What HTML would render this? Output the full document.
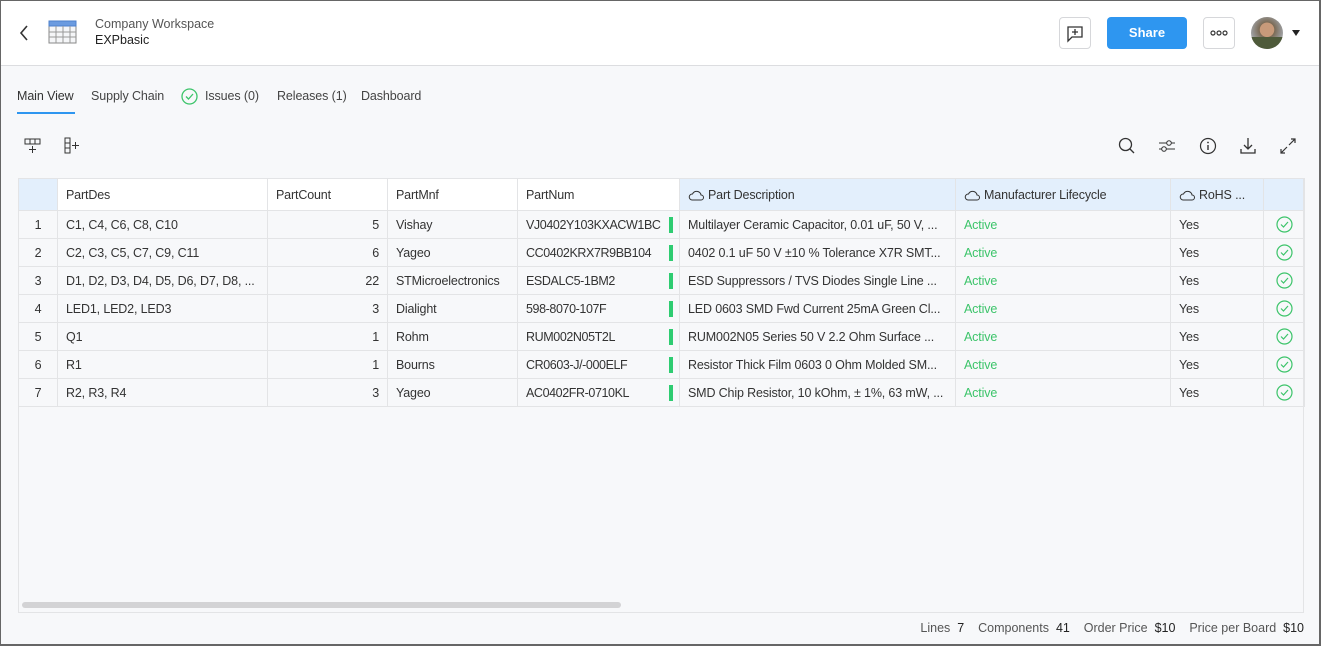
<!DOCTYPE html>
<html><head><meta charset="utf-8"><style>
*{box-sizing:border-box;margin:0;padding:0}
body{width:1321px;height:646px;overflow:hidden;background:#f7f8fa;font-family:"Liberation Sans",sans-serif;font-size:13px;color:#333;position:relative}
.frame{position:absolute;inset:0;border:1px solid #666;border-right:2px solid #666;border-bottom:2px solid #666;pointer-events:none;z-index:10}
.hdr{position:absolute;left:0;top:0;width:1321px;height:66px;background:#fff;border-bottom:1px solid #dcdde0}
.a{position:absolute}
.tab{position:absolute;top:89px;font-size:12.5px;color:#444;letter-spacing:-0.1px}
.btn{position:absolute;border:1px solid #d6d7da;border-radius:4px;background:#fff}
table{position:absolute;left:18px;top:178px;border-collapse:collapse;table-layout:fixed;width:1286px;font-size:12.5px;letter-spacing:-0.15px}
td,th{height:28px;border:1px solid #e3e4e6;padding:0 8px;white-space:nowrap;overflow:hidden;text-overflow:clip;font-weight:normal;text-align:left;background:#f7f8fa;position:relative}
th{height:32px;background:#fff;color:#333}
th.b{background:#e3effc}
td.n{text-align:center;padding:0}
td.r{text-align:right}
.g{color:#3cc46a}
.bar{position:absolute;right:6px;top:6px;width:4px;height:16px;background:#2ecc71}
.cl{display:inline-block;vertical-align:-2px;margin-right:4px}
</style></head><body>
<div class="frame"></div>
<div class="hdr">
<svg class="a" style="left:19px;top:25px" width="10" height="16"><path d="M8 1 L2 8 L8 15" fill="none" stroke="#333" stroke-width="1.6"/></svg>
<svg class="a" style="left:48px;top:20px" width="30" height="25"><rect x="1" y="1" width="27" height="22" fill="#f5f6f8" stroke="#888"/><rect x="1" y="1" width="27" height="5" fill="#6b9be0" stroke="#4e80cc"/><path d="M1 12H28M1 17H28M8 6V23M15 6V23M22 6V23" stroke="#999" fill="none"/></svg>
<div class="a" style="left:95px;top:17px;color:#555;font-size:12.5px">Company Workspace</div>
<div class="a" style="left:95px;top:33px;color:#222;font-size:12.5px">EXPbasic</div>
<div class="btn" style="left:1059px;top:17px;width:32px;height:32px"><svg width="30" height="30"><path d="M8 9H22V19H12L8 23Z" fill="none" stroke="#333" stroke-width="1.3"/><path d="M15 11V17M12 14H18" stroke="#333" stroke-width="1.3"/></svg></div>
<div class="a" style="left:1107px;top:17px;width:80px;height:32px;background:#2e96f0;border-radius:4px;color:#fff;font-weight:bold;text-align:center;line-height:32px;font-size:13px">Share</div>
<div class="btn" style="left:1203px;top:17px;width:32px;height:32px"><svg width="30" height="30"><circle cx="9" cy="15" r="2" fill="none" stroke="#333" stroke-width="1.2"/><circle cx="15" cy="15" r="2" fill="none" stroke="#333" stroke-width="1.2"/><circle cx="21" cy="15" r="2" fill="none" stroke="#333" stroke-width="1.2"/></svg></div>
<div class="a" style="left:1251px;top:17px;width:32px;height:32px;border-radius:50%;overflow:hidden;background:radial-gradient(circle at 50% 40%,#c89a7a 0 28%,#7a6a55 30%,#999 60%,#ddd 100%)"><div style="position:absolute;left:0;top:20px;width:32px;height:12px;background:#4e5a3a"></div></div>
<svg class="a" style="left:1292px;top:30px" width="8" height="6"><path d="M0 0H8L4 6Z" fill="#222"/></svg>
</div>
<div class="tab" style="left:17px;color:#333">Main View</div>
<div class="a" style="left:17px;top:112px;width:58px;height:2px;background:#2e96f0"></div>
<div class="tab" style="left:91px">Supply Chain</div>
<svg class="a" style="left:181px;top:88px" width="17" height="17"><circle cx="8.5" cy="8.5" r="7.5" fill="none" stroke="#3cc46a" stroke-width="1.3"/><path d="M5 8.5L7.5 11L12 6" fill="none" stroke="#3cc46a" stroke-width="1.3"/></svg>
<div class="tab" style="left:205px">Issues (0)</div>
<div class="tab" style="left:277px">Releases (1)</div>
<div class="tab" style="left:361px">Dashboard</div>
<svg class="a" style="left:24px;top:138px" width="18" height="16"><rect x="1" y="1" width="15" height="5" fill="none" stroke="#333"/><path d="M6 1V6M11 1V6M8.5 8V15M5 11.5H12" stroke="#333" fill="none"/></svg>
<svg class="a" style="left:64px;top:137px" width="18" height="18"><rect x="1" y="1" width="5" height="15" fill="none" stroke="#333"/><path d="M1 6H6M1 11H6M8 8.5H15M11.5 5V12" stroke="#333" fill="none"/></svg>
<svg class="a" style="left:1118px;top:137px" width="18" height="18"><circle cx="7.5" cy="7.5" r="6" fill="none" stroke="#333" stroke-width="1.3"/><path d="M12 12L16 16" stroke="#333" stroke-width="1.3"/></svg>
<svg class="a" style="left:1158px;top:138px" width="18" height="16"><path d="M1 5H17M1 11H17" stroke="#333"/><circle cx="11" cy="5" r="2.3" fill="#f7f8fa" stroke="#333"/><circle cx="6" cy="11" r="2.3" fill="#f7f8fa" stroke="#333"/></svg>
<svg class="a" style="left:1199px;top:137px" width="18" height="18"><circle cx="9" cy="9" r="7.5" fill="none" stroke="#333" stroke-width="1.2"/><path d="M9 8V13" stroke="#333" stroke-width="1.4"/><circle cx="9" cy="5.5" r="0.9" fill="#333"/></svg>
<svg class="a" style="left:1239px;top:137px" width="18" height="18"><path d="M9 1V12M5 8L9 12L13 8M2 12V16H16V12" fill="none" stroke="#333" stroke-width="1.3"/></svg>
<svg class="a" style="left:1280px;top:138px" width="16" height="16"><path d="M9 7L15 1M11 1H15V5M7 9L1 15M1 11V15H5" fill="none" stroke="#333" stroke-width="1.2"/></svg>
<table>
<colgroup><col style="width:39px"><col style="width:210px"><col style="width:120px"><col style="width:130px"><col style="width:162px"><col style="width:276px"><col style="width:215px"><col style="width:93px"><col style="width:41px"></colgroup>
<thead><tr><th class="b"></th><th>PartDes</th><th>PartCount</th><th>PartMnf</th><th>PartNum</th>
<th class="b"><svg class="cl" width="16" height="11"><path d="M4 10H13A2.5 2.5 0 0 0 13 5A4.5 4.5 0 0 0 4.5 4A3 3 0 0 0 4 10Z" fill="none" stroke="#333"/></svg>Part Description</th><th class="b"><svg class="cl" width="16" height="11"><path d="M4 10H13A2.5 2.5 0 0 0 13 5A4.5 4.5 0 0 0 4.5 4A3 3 0 0 0 4 10Z" fill="none" stroke="#333"/></svg>Manufacturer Lifecycle</th><th class="b"><svg class="cl" width="16" height="11"><path d="M4 10H13A2.5 2.5 0 0 0 13 5A4.5 4.5 0 0 0 4.5 4A3 3 0 0 0 4 10Z" fill="none" stroke="#333"/></svg>RoHS ...</th><th class="b"></th></tr></thead>
<tbody id="tb"></tbody>
</table>
<script>
var d=[["C1, C4, C6, C8, C10",5,"Vishay","VJ0402Y103KXACW1BC","Multilayer Ceramic Capacitor, 0.01 uF, 50 V, ..."],
["C2, C3, C5, C7, C9, C11",6,"Yageo","CC0402KRX7R9BB104","0402 0.1 uF 50 V ±10 % Tolerance X7R SMT..."],
["D1, D2, D3, D4, D5, D6, D7, D8, ...",22,"STMicroelectronics","ESDALC5-1BM2","ESD Suppressors / TVS Diodes Single Line ..."],
["LED1, LED2, LED3",3,"Dialight","598-8070-107F","LED 0603 SMD Fwd Current 25mA Green Cl..."],
["Q1",1,"Rohm","RUM002N05T2L","RUM002N05 Series 50 V 2.2 Ohm Surface ..."],
["R1",1,"Bourns","CR0603-J/-000ELF","Resistor Thick Film 0603 0 Ohm Molded SM..."],
["R2, R3, R4",3,"Yageo","AC0402FR-0710KL","SMD Chip Resistor, 10 kOhm, ± 1%, 63 mW, ..."]];
var ck='<svg width="17" height="17" style="display:block;margin:auto"><circle cx="8.5" cy="8.5" r="7.5" fill="none" stroke="#3cc46a" stroke-width="1.2"/><path d="M5 8.5L7.5 11L12 6" fill="none" stroke="#3cc46a" stroke-width="1.2"/></svg>';
var h="";d.forEach(function(r,i){h+='<tr><td class="n">'+(i+1)+'</td><td>'+r[0]+'</td><td class="r">'+r[1]+'</td><td>'+r[2]+'</td><td style="padding-right:14px;letter-spacing:-0.4px">'+r[3]+'<span class="bar"></span></td><td>'+r[4]+'</td><td class="g">Active</td><td>Yes</td><td style="padding:0">'+ck+'</td></tr>';});
document.getElementById("tb").innerHTML=h;
</script>
<div class="a" style="left:18px;top:178px;width:1286px;height:435px;border:1px solid #e3e4e6;pointer-events:none"></div>
<div class="a" style="left:22px;top:602px;width:599px;height:6px;border-radius:3px;background:#d3d3d5"></div>
<div class="a" style="right:17px;top:621px;font-size:12.5px;color:#555">Lines&nbsp; <span style="color:#222">7</span>&nbsp;&nbsp;&nbsp; Components&nbsp; <span style="color:#222">41</span>&nbsp;&nbsp;&nbsp; Order Price&nbsp; <span style="color:#222">$10</span>&nbsp;&nbsp;&nbsp; Price per Board&nbsp; <span style="color:#222">$10</span></div>
</body></html>
